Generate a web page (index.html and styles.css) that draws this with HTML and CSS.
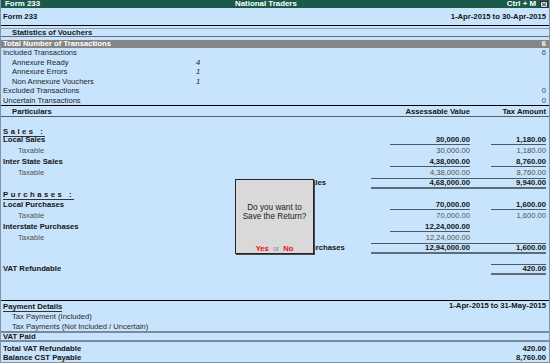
FILE: index.html
```html
<!DOCTYPE html>
<html>
<head>
<meta charset="utf-8">
<link rel="stylesheet" href="styles.css">
</head>
<body>
<div class="win">
  <div class="titlebar">
    <span class="tb-left">Form 233</span>
    <span class="tb-center">National Traders</span>
    <span class="tb-right">Ctrl + M
      <span class="close"><svg width="6" height="5" viewBox="0 0 6 5"><path d="M0.8 0.6 L5.2 4.4 M5.2 0.6 L0.8 4.4" stroke="#1e1e1e" stroke-width="1"/></svg></span>
    </span>
  </div>

  <div class="hdr"><span>Form 233</span><span>1-Apr-2015 to 30-Apr-2015</span></div>

  <div class="stats-head">Statistics of Vouchers</div>
  <div class="total-bar"><span>Total Number of Transactions</span><span>6</span></div>

  <div class="srow"><span>Included Transactions</span><span class="scount"></span><span class="sval">6</span></div>
  <div class="srow"><span class="ind">Annexure Ready</span><span class="scount">4</span><span class="sval"></span></div>
  <div class="srow"><span class="ind">Annexure Errors</span><span class="scount">1</span><span class="sval"></span></div>
  <div class="srow"><span class="ind">Non Annexure Vouchers</span><span class="scount">1</span><span class="sval"></span></div>
  <div class="srow"><span>Excluded Transactions</span><span class="scount"></span><span class="sval">0</span></div>
  <div class="srow"><span>Uncertain Transactions</span><span class="scount"></span><span class="sval">0</span></div>

  <div class="colhead">
    <span class="ch-part">Particulars</span>
    <span class="amt">Assessable Value</span>
    <span class="amt">Tax Amount</span>
  </div>

  <div class="body">
    <div class="grp-row"><span class="grp">Sales :</span></div>

    <div class="r main"><span class="lbl">Local Sales</span><span class="amt ul">30,000.00</span><span class="amt ul">1,180.00</span></div>
    <div class="r sub"><span class="lbl">Taxable</span><span class="amt">30,000.00</span><span class="amt">1,180.00</span></div>
    <div class="r main pt2"><span class="lbl">Inter State Sales</span><span class="amt ul">4,38,000.00</span><span class="amt ul">8,760.00</span></div>
    <div class="r sub"><span class="lbl">Taxable</span><span class="amt">4,38,000.00</span><span class="amt">8,760.00</span></div>
    <div class="tot-row">
      <span class="tot-lbl">Total Sales</span>
      <div class="tot-box"><span class="amt">4,68,000.00</span><span class="amt">9,940.00</span></div>
    </div>

    <div class="grp-row"><span class="grp">Purchases :</span></div>

    <div class="r main pt2"><span class="lbl">Local Purchases</span><span class="amt ul">70,000.00</span><span class="amt ul">1,600.00</span></div>
    <div class="r sub"><span class="lbl">Taxable</span><span class="amt">70,000.00</span><span class="amt">1,600.00</span></div>
    <div class="r main pt2"><span class="lbl">Interstate Purchases</span><span class="amt ul">12,24,000.00</span><span class="amt"></span></div>
    <div class="r sub"><span class="lbl">Taxable</span><span class="amt">12,24,000.00</span><span class="amt"></span></div>
    <div class="tot-row">
      <span class="tot-lbl">Total Purchases</span>
      <div class="tot-box"><span class="amt">12,94,000.00</span><span class="amt">1,600.00</span></div>
    </div>

    <div class="r vat"><span class="lbl">VAT Refundable</span><span class="amt"></span><span class="amt vat-amt">420.00</span></div>
  </div>

  <div class="pay">
    <div class="pay-head"><span class="pay-title">Payment Details</span><span class="pay-date">1-Apr-2015 to 31-May-2015</span></div>
    <div class="prow ind">Tax Payment (Included)</div>
    <div class="prow ind">Tax Payments (Not Included / Uncertain)</div>
    <div class="vatpaid">VAT Paid</div>
    <div class="pay-tot">
      <div class="trow"><span>Total VAT Refundable</span><span>420.00</span></div>
      <div class="trow"><span>Balance CST Payable</span><span>8,760.00</span></div>
    </div>
  </div>

  <div class="dialog">
    <div class="dlg-msg">Do you want to<br>Save the Return?</div>
    <div class="dlg-btns"><span class="yes">Yes</span><span class="or">or</span><span class="no">No</span></div>
  </div>
</div>
</body>
</html>
```

FILE: styles.css
```css
* { box-sizing: border-box; margin: 0; padding: 0; }

html, body {
  width: 550px;
  height: 363px;
  overflow: hidden;
  background: #c8e4fc;
}

body {
  font-family: "Liberation Sans", Arial, sans-serif;
  font-size: 7.6px;
  color: #151515;
}

.win {
  position: relative;
  width: 550px;
  height: 363px;
  display: flex;
  flex-direction: column;
  background: #c8e4fc;
  border-left: 1px solid #8494a4;
  border-right: 1px solid #8494a4;
  border-bottom: 1px solid #8494a4;
}

/* title bar */
.titlebar {
  height: 8px;
  flex: none;
  display: flex;
  align-items: center;
  background: #1b5a4b;
  color: #fff;
  font-weight: bold;
  font-size: 7.9px;
  line-height: 8px;
  padding: 0 1px 0 4px;
}
.tb-left { width: 230px; }
.tb-right { margin-left: auto; display: flex; align-items: center; gap: 4px; }
.close {
  width: 8px;
  height: 7px;
  background: #e6eeeb;
  border: 1px solid #2a2a2a;
  display: flex;
  align-items: center;
  justify-content: center;
}

/* header */
.hdr {
  height: 18px;
  flex: none;
  display: flex;
  justify-content: space-between;
  align-items: center;
  font-weight: bold;
  font-size: 7.7px;
  padding: 0 3px 0 2px;
  border-bottom: 1px solid #000;
}

.stats-head {
  margin-top: 2px;
  height: 9px;
  flex: none;
  border-top: 1px solid #8e9eae;
  border-bottom: 1px solid #5f6f7f;
  line-height: 7px;
  padding-left: 11px;
  font-weight: bold;
  font-size: 7.7px;
}

.total-bar {
  margin-top: 3px;
  height: 8px;
  flex: none;
  background: #858585;
  color: #fff;
  font-weight: bold;
  font-size: 7.7px;
  line-height: 8px;
  display: flex;
  justify-content: space-between;
  padding: 0 3px 0 2px;
}

.srow {
  height: 9.5px;
  flex: none;
  line-height: 9.5px;
  display: grid;
  grid-template-columns: 193px 8px 1fr;
  padding: 0 3px 0 2px;
  color: #1e1e1e;
}
.srow .ind, .ind { padding-left: 9px; }
.scount { font-style: italic; }
.sval { text-align: right; color: #4a4a4a; }

.colhead {
  height: 12px;
  flex: none;
  border-top: 1px solid #000;
  border-bottom: 1px solid #4f5f6f;
  display: grid;
  grid-template-columns: 1fr 80px 55px;
  column-gap: 21px;
  align-items: center;
  font-weight: bold;
  font-size: 7.7px;
  padding: 0 3px 0 2px;
}
.ch-part { padding-left: 9px; }

.amt { text-align: right; white-space: nowrap; }

/* body */
.body {
  flex: none;
  padding-top: 9px;
}

.grp-row {
  height: 10px;
  padding: 1px 0 0 2px;
}
.grp {
  display: inline-block;
  line-height: 8px;
  font-weight: bold;
  font-size: 7.7px;
  letter-spacing: 2.5px;
  border-bottom: 1px solid #333;
}

.r {
  display: grid;
  grid-template-columns: 1fr 80px 55px;
  column-gap: 21px;
  align-items: start;
  padding: 0 3px 0 2px;
  line-height: 8px;
}
.r.main { height: 9px; font-weight: bold; font-size: 7.7px; }
.r.main.pt2 { height: 11px; padding-top: 2px; }
.r.sub { height: 11px; padding-top: 2px; color: #505050; }
.r.sub .lbl { padding-left: 15px; }
.ul { border-bottom: 1px solid #4a5a6a; }

.tot-row {
  display: flex;
  align-items: start;
  padding: 0 3px 0 2px;
  font-weight: bold;
  font-size: 7.7px;
  line-height: 8px;
}
.tot-lbl { flex: 1; padding-left: 283px; padding-top: 1px; white-space: nowrap; }
.tot-box {
  width: 175px;
  flex: none;
  display: grid;
  grid-template-columns: 80px 55px;
  column-gap: 21px;
  padding-left: 19px;
  border-top: 1px solid #4a5a6a;
  border-bottom: 2px solid #5c6c7a;
}

.r.vat { margin-top: 10px; font-weight: bold; font-size: 7.7px; }
.r.vat .lbl { padding-top: 1px; }
.vat-amt {
  border-top: 1px solid #4a5a6a;
  border-bottom: 2px solid #5c6c7a;
}

/* payment */
.pay {
  margin-top: auto;
  flex: none;
  border-top: 1px solid #000;
}
.pay-head {
  height: 11px;
  display: flex;
  justify-content: space-between;
  align-items: start;
  padding: 1.5px 3px 0 2px;
  font-weight: bold;
  font-size: 7.7px;
  line-height: 8px;
}
.pay-title { display: inline-block; border-bottom: 1px solid #333; }
.pay-date { margin-top: -1px; }
.prow {
  height: 9.5px;
  line-height: 9.5px;
  padding-left: 11px;
  color: #2a2a2a;
}
.vatpaid {
  height: 11px;
  line-height: 7px;
  border-top: 2px solid #7a8a98;
  border-bottom: 2px solid #7a8a98;
  padding-left: 2px;
  font-weight: bold;
  font-size: 7.7px;
}
.pay-tot { padding-top: 1.5px; }
.trow {
  height: 9.2px;
  line-height: 9.2px;
  display: flex;
  justify-content: space-between;
  padding: 0 3px 0 2px;
  font-weight: bold;
  font-size: 7.7px;
}

/* dialog overlay */
.dialog {
  position: absolute;
  z-index: 10;
  left: 234px;
  top: 179px;
  width: 79px;
  height: 75px;
  background: #d9d9d9;
  border: 1px solid #252525;
  box-shadow: 1px 1px 0 #4a4a4a;
  display: flex;
  flex-direction: column;
  align-items: center;
  justify-content: space-between;
  color: #222;
  font-size: 8.2px;
}
.dlg-msg {
  margin-top: 23px;
  text-align: center;
  line-height: 9.4px;
}
.dlg-btns {
  line-height: 8px;
  margin-bottom: 0;
  display: flex;
  gap: 4px;
  align-items: baseline;
}
.yes, .no { color: #e8101a; font-weight: bold; font-size: 7.7px; }
.or { color: #8a8a8a; font-size: 7px; }
```
